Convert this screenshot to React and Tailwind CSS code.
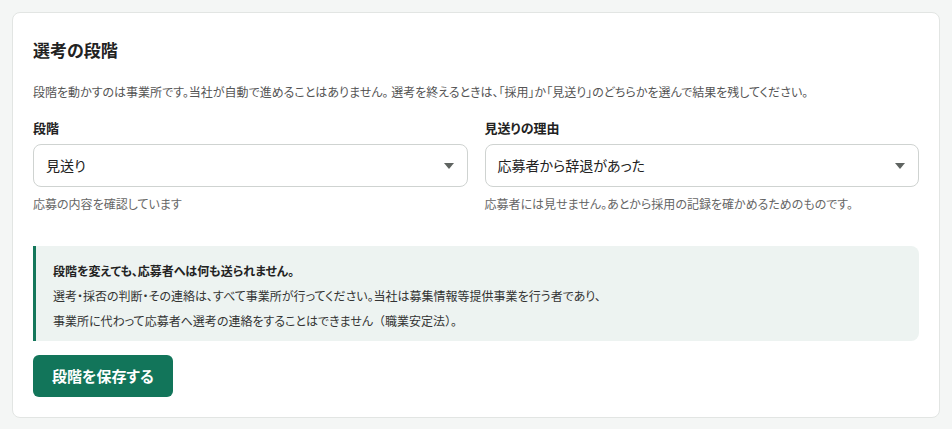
import React, { useState } from "react";

const font = {
  fontFamily: '"Noto Sans CJK JP", "Noto Sans", sans-serif',
};

const Caret = () => (
  <svg width="10" height="6" viewBox="0 0 10 6" className="shrink-0">
    <path d="M0 0h10L5 6z" fill="#5f6461" />
  </svg>
);

const SelectField = ({ label, value, options, onChange, help }) => {
  const [open, setOpen] = useState(false);

  return (
    <div className="flex flex-col">
      <label className="text-[13px] font-bold leading-5 text-[#222]">{label}</label>
      <div className="relative mt-[6px]">
        <button
          type="button"
          onClick={() => setOpen(!open)}
          className="flex h-[43px] w-full items-center justify-between rounded-lg border border-[#cfd3d1] bg-white pl-3 pr-[13px] text-left text-[14px] text-[#222]"
        >
          <span>{value}</span>
          <Caret />
        </button>
        {open && (
          <ul className="absolute left-0 right-0 top-[46px] z-10 rounded-lg border border-[#cfd3d1] bg-white py-1 text-[14px] shadow">
            {options.map((o) => (
              <li
                key={o}
                onClick={() => {
                  onChange(o);
                  setOpen(false);
                }}
                className="cursor-pointer px-3 py-1 hover:bg-[#edf3f1]"
              >
                {o}
              </li>
            ))}
          </ul>
        )}
      </div>
      <p className="mt-2 text-[12px] leading-[18px] text-[#666]">{help}</p>
    </div>
  );
};

const App = () => {
  const [stage, setStage] = useState("見送り");
  const [reason, setReason] = useState("応募者から辞退があった");

  return (
    <div className="min-h-[429px] bg-[#f4f6f5] p-3 [font-feature-settings:'palt']" style={font}>
      <section className="rounded-lg border border-[#e2e5e3] bg-white px-5 pt-[25px] pb-5">
        <h2 className="text-[17px] font-bold leading-6 text-[#222]">選考の段階</h2>
        <p className="mt-[21px] text-[12px] leading-[18px] text-[#555]">
          段階を動かすのは事業所です。当社が自動で進めることはありません。 選考を終えるときは、「採用」か「見送り」のどちらかを選んで結果を残してください。
        </p>

        <div className="mt-[17px] grid grid-cols-2 gap-[17px]">
          <SelectField
            label="段階"
            value={stage}
            onChange={setStage}
            options={["応募受付", "書類選考", "面接", "採用", "見送り"]}
            help="応募の内容を確認しています"
          />
          <SelectField
            label="見送りの理由"
            value={reason}
            onChange={setReason}
            options={["応募者から辞退があった", "条件が合わなかった", "その他"]}
            help="応募者には見せません。あとから採用の記録を確かめるためのものです。"
          />
        </div>

        <div className="mt-[33px] rounded-r-lg border-l-[3px] border-[#14775b] bg-[#edf3f1] pl-[17px] pr-4 pt-3 pb-2 text-[12px] leading-[25px] text-[#333]">
          <p className="font-bold text-[#222]">段階を変えても、応募者へは何も送られません。</p>
          <p>
            選考・採否の判断・その連絡は、すべて事業所が行ってください。当社は募集情報等提供事業を行う者であり、
            <br />
            事業所に代わって応募者へ選考の連絡をすることはできません
            <span className="[font-feature-settings:normal]">（職業安定法）。</span>
          </p>
        </div>

        <button className="mt-[14px] h-[42px] rounded-md bg-[#12755a] px-[19px] text-[15px] font-bold text-white">
          段階を保存する
        </button>
      </section>
    </div>
  );
};

export default App;
